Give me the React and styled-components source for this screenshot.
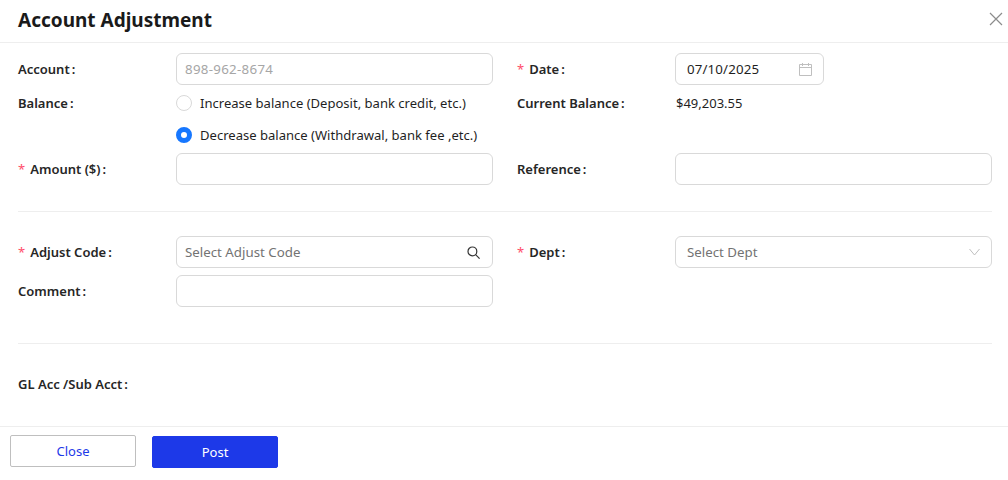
import React from "react";
import styled, { createGlobalStyle } from "styled-components";

const Global = createGlobalStyle`
  html, body { margin: 0; padding: 0; background: #fff; }
  body { font-family: "Noto Sans", "Open Sans", Arial, sans-serif; font-size: 14px; color: #1f1f1f; }
  * { box-sizing: border-box; }
`;

const Dialog = styled.div`
  width: 1008px;
  height: 480px;
  display: flex;
  flex-direction: column;
  overflow: hidden;
  background: #fff;
`;
const Header = styled.header`
  height: 43px;
  flex: none;
  display: flex;
  align-items: center;
  justify-content: space-between;
  padding: 0 5px 2px 18px;
  border-bottom: 1px solid #eeeeee;
`;
const Title = styled.h1`
  margin: 0;
  font-size: 19px;
  line-height: 24px;
  font-weight: 700;
  color: #1a1a1a;
`;
const CloseIcon = styled.button`
  width: 14px;
  height: 14px;
  margin-bottom: 2px;
  padding: 0;
  border: 0;
  background: none;
  display: flex;
  color: #8c8c8c;
`;
const Body = styled.main`
  flex: 1;
  padding: 10px 16px 0 18px;
  display: flex;
  flex-direction: column;
`;
const Grid = styled.div`
  display: grid;
  grid-template-columns: 158px 317px 182px 317px;
  row-gap: ${(p) => p.$gap}px;
  & > :nth-child(4n + 3) { margin-left: 24px; }
`;
const Label = styled.label`
  display: flex;
  align-items: center;
  align-self: start;
  height: 32px;
  font-weight: 600;
  font-size: 13px;
  color: #262626;
`;
const Req = styled.span`
  color: #ff4d6a;
  margin-right: 5px;
  font-weight: 400;
`;
const Colon = styled.span`
  margin-left: 2px;
`;
const Box = styled.div`
  height: 32px;
  width: ${(p) => p.$w || "100%"};
  border: 1px solid #d9d9d9;
  border-radius: 6px;
  background: #fff;
  display: flex;
  align-items: center;
  justify-content: space-between;
  padding: ${(p) => (p.$wide ? "0 11px 0 11px" : "0 12px 0 8px")};
  font-size: 13.3px;
  letter-spacing: ${(p) => p.$track || 0}px;
  color: ${(p) => p.$color || "#1f1f1f"};
`;
const Value = styled.div`
  display: flex;
  align-items: center;
  height: 32px;
  padding-left: 1px;
  font-size: 13px;
`;
const Radios = styled.div`
  display: flex;
  flex-direction: column;
`;
const RadioRow = styled.div`
  display: flex;
  align-items: center;
  height: 32px;
  font-size: 13.05px;
  gap: 8px;
`;
const Dot = styled.span`
  width: 16px;
  height: 16px;
  border-radius: 50%;
  flex: none;
  background: #fff;
  border: ${(p) => (p.$on ? "5px solid #1677ff" : "1px solid #d9d9d9")};
`;
const Divider = styled.hr`
  margin: ${(p) => p.$m};
  border: 0;
  border-top: 1px solid #eeeeee;
  height: 0;
`;
const GlRow = styled.div`
  margin-top: 24px;
`;
const Footer = styled.footer`
  height: 54px;
  flex: none;
  border-top: 1px solid #eeeeee;
  padding: 8px 0 0 10px;
  display: flex;
  align-items: flex-start;
  gap: 16px;
`;
const Button = styled.button`
  width: 126px;
  height: 32px;
  margin-top: ${(p) => (p.$primary ? 1 : 0)}px;
  border-radius: 2px;
  font: inherit;
  font-size: 13px;
  border: 1px solid ${(p) => (p.$primary ? "#1d39e8" : "#bfbfbf")};
  background: ${(p) => (p.$primary ? "#1d39e8" : "#fff")};
  color: ${(p) => (p.$primary ? "#fff" : "#1d39e8")};
`;

const Field = ({ req, children }) => (
  <Label>
    {req && <Req>*</Req>}
    {children}
    <Colon>:</Colon>
  </Label>
);

export default function App() {
  return (
    <Dialog>
      <Global />
      <Header>
        <Title>Account Adjustment</Title>
        <CloseIcon aria-label="Close">
          <svg width="14" height="14" viewBox="0 0 14 14" fill="none" stroke="currentColor" strokeWidth="1.2">
            <path d="M1 1l12 12M13 1L1 13" />
          </svg>
        </CloseIcon>
      </Header>
      <Body>
        <Grid $gap={2}>
          <Field>Account</Field>
          <Box $color="#a6a6a6" $track={0.3}>898-962-8674</Box>
          <Field req>Date</Field>
          <Box $w="149px" $wide $track={0.15}>
            07/10/2025
            <svg width="13" height="13" viewBox="0 0 13 13" fill="none" stroke="#bfbfbf" strokeWidth="1">
              <path d="M0.5 1.5h12v11h-12zM0.5 4.5h12M3.5 0v3M9.5 0v3" />
            </svg>
          </Box>
          <Field>Balance</Field>
          <Radios>
            <RadioRow><Dot />Increase balance (Deposit, bank credit, etc.)</RadioRow>
            <RadioRow><Dot $on />Decrease balance (Withdrawal, bank fee ,etc.)</RadioRow>
          </Radios>
          <Field>Current Balance</Field>
          <Value>$49,203.55</Value>
          <Field req>Amount ($)</Field>
          <Box />
          <Field>Reference</Field>
          <Box />
        </Grid>
        <Divider $m="26px 0 24px" />
        <Grid $gap={7}>
          <Field req>Adjust Code</Field>
          <Box $color="#737373">
            Select Adjust Code
            <svg width="13" height="13" viewBox="0 0 13 13" fill="none" stroke="#333" strokeWidth="1.2">
              <circle cx="5.4" cy="5.4" r="4.4" />
              <path d="M8.6 8.6L12.6 12.6" />
            </svg>
          </Box>
          <Field req>Dept</Field>
          <Box $color="#737373" $wide>
            Select Dept
            <svg width="11" height="8" viewBox="0 0 11 8" fill="none" stroke="#bfbfbf" strokeWidth="1">
              <path d="M0.5 1L5.5 7l5-6" />
            </svg>
          </Box>
          <Field>Comment</Field>
          <Box />
        </Grid>
        <Divider $m="36px 0 0" />
        <GlRow>
          <Field>GL Acc /Sub Acct</Field>
        </GlRow>
      </Body>
      <Footer>
        <Button>Close</Button>
        <Button $primary>Post</Button>
      </Footer>
    </Dialog>
  );
}
